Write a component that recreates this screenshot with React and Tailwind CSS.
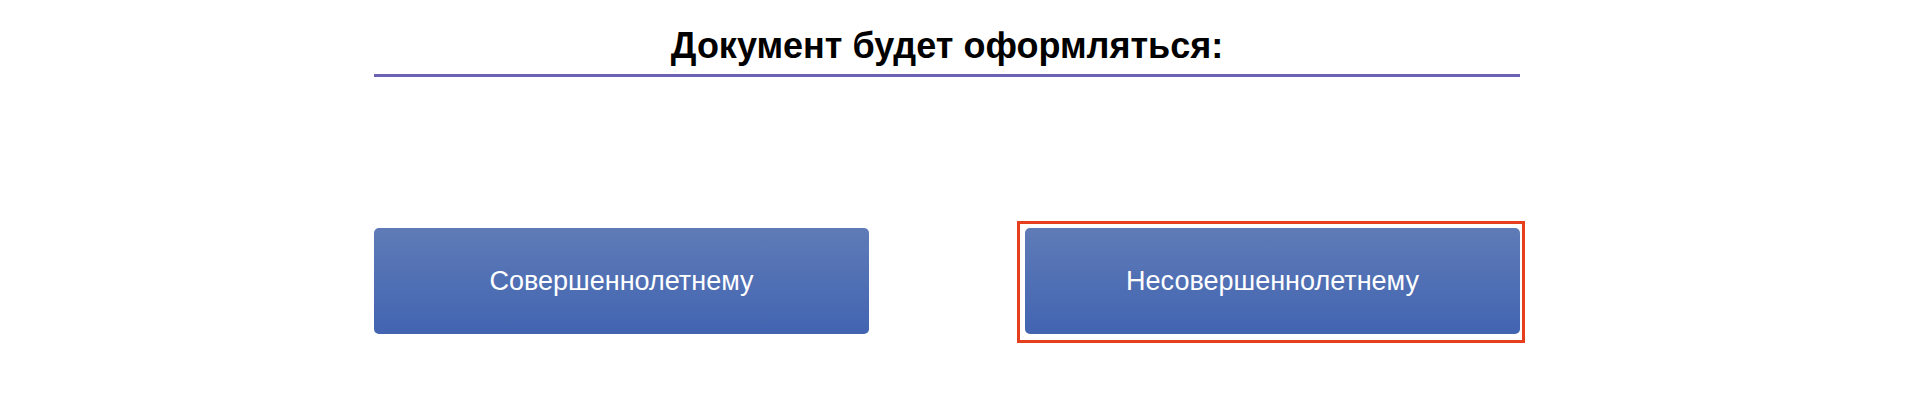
export default function App() {
  return (
    <div className="min-h-[400px] bg-white pl-[374px] font-['Liberation_Sans',Arial,sans-serif]">
      <div className="w-[1146px]">
        {/* Heading */}
        <div className="pt-[25px] pb-[8px] border-b-[3px] border-[#6b62b6] text-center">
          <h1 className="text-[36px] font-bold leading-[41px] text-black">Документ будет оформляться:</h1>
        </div>

        {/* Choice buttons */}
        <div className="grid grid-cols-2 gap-[156px] mt-[151px]">
          <button className="h-[106px] rounded-[5px] bg-gradient-to-b from-[#5f7bb7] to-[#4264b1] text-white text-[27px]">
            Совершеннолетнему
          </button>
          <div className="relative">
            <div className="absolute left-[-8px] top-[-7px] right-[-5px] bottom-[-9px] border-[3px] border-[#e63f1e]"></div>
            <button className="relative w-full h-[106px] rounded-[5px] bg-gradient-to-b from-[#5f7bb7] to-[#4264b1] text-white text-[27px]">
              Несовершеннолетнему
            </button>
          </div>
        </div>
      </div>
    </div>
  );
}
